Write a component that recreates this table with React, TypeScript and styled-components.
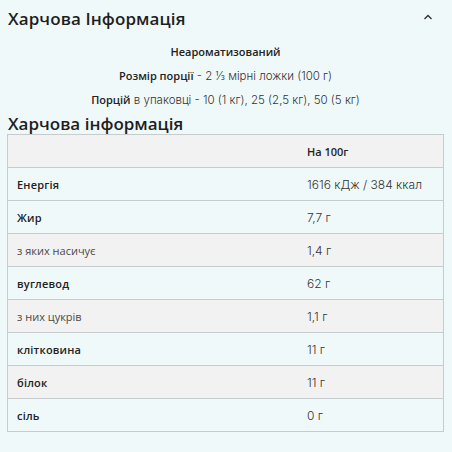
import React from "react";
import styled, { createGlobalStyle } from "styled-components";

const GlobalStyle = createGlobalStyle`
  html, body {
    margin: 0;
    padding: 0;
    background: #f0f9fa;
  }
  body {
    font-family: "Open Sans", "Noto Sans", sans-serif;
    color: #222;
  }
`;

const rows = [
  { label: "Енергія", value: "1616 кДж / 384 ккал", bold: true, shaded: false },
  { label: "Жир", value: "7,7 г", bold: true, shaded: false },
  { label: "з яких насичує", value: "1,4 г", bold: false, shaded: true },
  { label: "вуглевод", value: "62 г", bold: true, shaded: false },
  { label: "з них цукрів", value: "1,1 г", bold: false, shaded: true },
  { label: "клітковина", value: "11 г", bold: true, shaded: false },
  { label: "білок", value: "11 г", bold: true, shaded: true },
  { label: "сіль", value: "0 г", bold: true, shaded: false },
];

export default function App() {
  return (
    <>
      <GlobalStyle />
      <StyledPanel>
        <StyledHeader>
          <StyledTitle>Харчова Інформація</StyledTitle>
          <StyledChevron viewBox="0 0 10 6" aria-hidden>
            <path d="M1.5 5 L5 1.6 L8.5 5" />
          </StyledChevron>
        </StyledHeader>
        <StyledInfo>
          <StyledLine>
            <b>Неароматизований</b>
          </StyledLine>
          <StyledLine>
            <b>Розмір порції</b> - 2 ⅓ мірні ложки (100 г)
          </StyledLine>
          <StyledLine>
            <b>Порцій</b> в упаковці - 10 (1 кг), 25 (2,5 кг), 50 (5 кг)
          </StyledLine>
        </StyledInfo>
        <StyledSubtitle>Харчова інформація</StyledSubtitle>
        <StyledTable>
          <tbody>
            <StyledRow $shaded>
              <StyledLabel $bold />
              <StyledValue $bold>На 100г</StyledValue>
            </StyledRow>
            {rows.map((r) => (
              <StyledRow key={r.label} $shaded={r.shaded}>
                <StyledLabel $bold={r.bold}>{r.label}</StyledLabel>
                <StyledValue>{r.value}</StyledValue>
              </StyledRow>
            ))}
          </tbody>
        </StyledTable>
      </StyledPanel>
    </>
  );
}

const StyledPanel = styled.div`
  width: 452px;
  height: 452px;
  padding: 0 8px 0 7px;
  box-sizing: border-box;
  overflow: hidden;
`;

const StyledHeader = styled.div`
  display: flex;
  align-items: center;
  justify-content: space-between;
  height: 36px;
  padding-left: 1px;
  padding-right: 11px;
`;

const StyledTitle = styled.h2`
  margin: 0;
  font-size: 17px;
  font-weight: 600;
  color: #1e1e1e;
  letter-spacing: 0.1px;
`;

const StyledChevron = styled.svg`
  width: 10px;
  height: 6px;
  margin-top: -3px;
  fill: none;
  stroke: #333;
  stroke-width: 1.4;
`;

const StyledInfo = styled.div`
  display: flex;
  flex-direction: column;
  align-items: center;
  gap: 6px;
  padding-top: 7px;
`;

const StyledLine = styled.div`
  font-family: "Inter", "Open Sans", sans-serif;
  font-weight: 300;
  font-size: 11.5px;
  line-height: 18px;
  color: #333;

  b {
    font-family: "Open Sans", sans-serif;
    font-size: 11px;
    font-weight: 600;
    color: #222;
  }
`;

const StyledSubtitle = styled.h3`
  margin: 4px 0 0 1px;
  font-size: 17px;
  line-height: 21px;
  font-weight: 600;
  color: #1e1e1e;
`;

const StyledTable = styled.table`
  width: 437px;
  border-collapse: collapse;
  border: 1px solid #c6ccce;
`;

const StyledRow = styled.tr<{ $shaded?: boolean }>`
  height: 33px;
  background: ${(p) => (p.$shaded ? "#f3f2f2" : "transparent")};
  border-bottom: 1px solid #c6ccce;
`;

const StyledLabel = styled.td<{ $bold?: boolean }>`
  width: 290px;
  padding: 0 0 0 9px;
  font-size: 11px;
  font-weight: ${(p) => (p.$bold ? 600 : 400)};
  color: ${(p) => (p.$bold ? "#222" : "#4a4a4a")};
  letter-spacing: ${(p) => (p.$bold ? "0.2px" : "0")};
`;

const StyledValue = styled.td<{ $bold?: boolean }>`
  padding: 0;
  font-family: ${(p) => (p.$bold ? '"Open Sans", sans-serif' : '"Inter", "Open Sans", sans-serif')};
  font-size: ${(p) => (p.$bold ? "11px" : "12px")};
  font-weight: ${(p) => (p.$bold ? 600 : 300)};
  color: ${(p) => (p.$bold ? "#222" : "#333")};
`;
